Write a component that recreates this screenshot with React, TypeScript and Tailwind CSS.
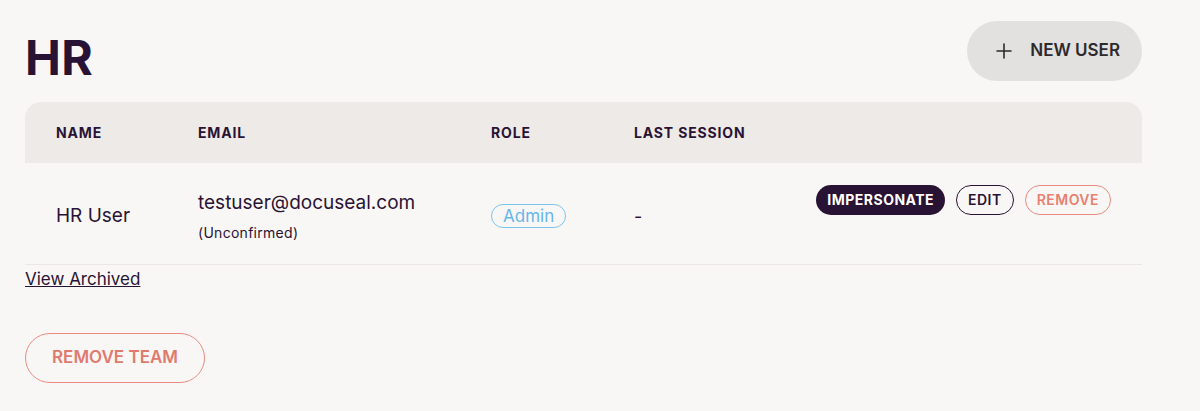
import { Plus } from "lucide-react";

const App = () => {
  return (
    <div className="min-h-[411px] w-[1200px] bg-[#f9f7f6] text-[#291334] font-['Inter',sans-serif] pt-[21px] pl-[25px] pr-[58px]">
      <div className="flex items-start justify-between">
        <h1 className="text-[48px] font-bold leading-[46px] mt-[14px] tracking-[0.01em]">HR</h1>
        <button className="flex items-center gap-[14px] h-[60px] pl-[25px] pr-[22px] rounded-full bg-[#e3e1e0] text-[#2d2a2e] text-[17px] font-semibold">
          <Plus size={24} strokeWidth={1.6} />
          NEW USER
        </button>
      </div>

      <div className="mt-[21px]">
        <div className="flex items-center h-[61px] bg-[#eeeae7] rounded-t-[16px] pl-[31px] text-[14px] font-bold tracking-[0.06em]">
          <div className="w-[142px]">NAME</div>
          <div className="w-[293px]">EMAIL</div>
          <div className="w-[143px]">ROLE</div>
          <div className="flex-1">LAST SESSION</div>
        </div>
        <div className="flex items-center h-[102px] pt-[5px] border-b border-[#ebe7e4] pl-[31px] pr-[31px]">
          <div className="w-[142px] text-[19px]">HR User</div>
          <div className="w-[293px]">
            <div className="text-[19px] leading-[26px]">testuser@docuseal.com</div>
            <div className="text-[14px] mt-[6px] tracking-[0.02em]">(Unconfirmed)</div>
          </div>
          <div className="w-[143px]">
            <span className="inline-flex items-center h-[24px] px-[11px] rounded-full border border-[#7cc3ee] text-[#66b6ea] text-[17px]">
              Admin
            </span>
          </div>
          <div className="flex-1 text-[18px]">-</div>
          <div className="flex items-center gap-[11px] -mt-[33px] tracking-[0.03em]">
            <button className="h-[30px] px-[11px] rounded-full bg-[#291334] text-white text-[14px] font-bold">
              IMPERSONATE
            </button>
            <button className="h-[30px] px-[11px] rounded-full border border-[#291334] text-[14px] font-semibold">
              EDIT
            </button>
            <button className="h-[30px] px-[11px] rounded-full border border-[#e88b80] text-[#e8806f] text-[14px] font-semibold">
              REMOVE
            </button>
          </div>
        </div>
      </div>

      <a href="#" className="inline-block mt-[2px] text-[17px] underline">
        View Archived
      </a>

      <div className="mt-[40px]">
        <button className="h-[50px] px-[26px] rounded-full border border-[#e88b80] text-[#e07a6f] text-[17px] font-semibold">
          REMOVE TEAM
        </button>
      </div>
    </div>
  );
};

export default App;
